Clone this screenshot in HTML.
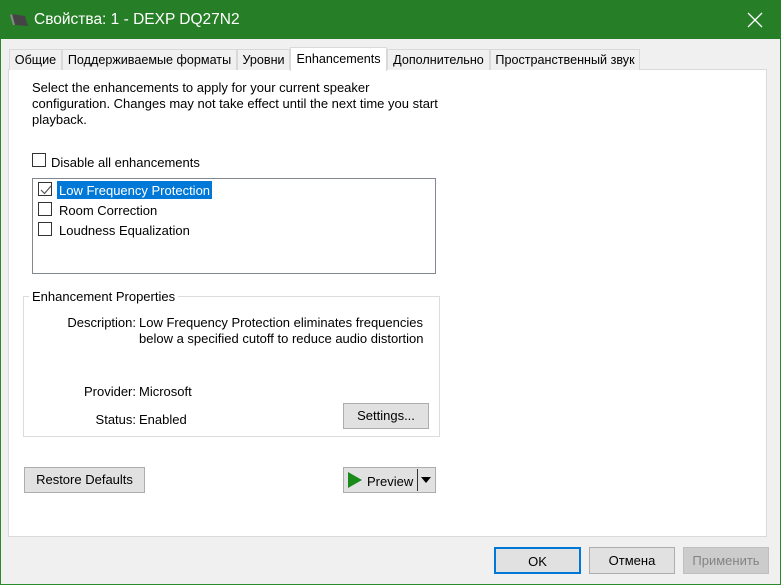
<!DOCTYPE html>
<html><head><meta charset="utf-8"><style>
*{margin:0;padding:0;box-sizing:border-box}
body{width:781px;height:585px;background:#f0f0f0;font-family:"Liberation Sans",sans-serif;font-size:13px;color:#000;position:relative;overflow:hidden}
.a{position:absolute;white-space:nowrap}
.r{position:absolute;white-space:nowrap;text-align:right;width:120px;left:16px}
.win{position:absolute;left:0;top:0;width:781px;height:585px;border:1px solid #2a8a2a}
.title{position:absolute;left:0;top:0;width:781px;height:39px;background:#267f26}
.tab{position:absolute;top:49px;height:21px;border:1px solid #d9d9d9;border-bottom:none;background:#f0f0f0;text-align:center;line-height:20px;font-size:12.6px}
.btn{position:absolute;background:#e1e1e1;border:1px solid #adadad;text-align:center;font-size:13px}
.cb{position:absolute;width:14px;height:14px;border:1px solid #333;background:#fff}
</style></head><body>
<div class="win"></div>
<div class="title"></div>
<svg class="a" style="left:10px;top:12px" width="20" height="16"><polygon points="2,2 15,4 18,14 5,13" fill="#444"/><polygon points="2,2 5,13 3,13 0,3" fill="#888"/></svg>
<div class="a" style="left:34px;top:11px;font-size:15.5px;color:#fff">Свойства: 1 - DEXP DQ27N2</div>
<svg class="a" style="left:747px;top:12px" width="16" height="16"><path d="M1 1L15 15M15 1L1 15" stroke="#fff" stroke-width="1.3"/></svg>
<div class="a" style="left:8px;top:69px;width:759px;height:468px;background:#fff;border:1px solid #d9d9d9"></div>
<div class="tab" style="left:9px;width:53px">Общие</div>
<div class="tab" style="left:62px;width:175px">Поддерживаемые форматы</div>
<div class="tab" style="left:237px;width:53px">Уровни</div>
<div class="tab" style="left:387px;width:103px">Дополнительно</div>
<div class="tab" style="left:490px;width:150px">Пространственный звук</div>
<div class="tab" style="left:290px;top:47px;height:24px;width:97px;background:#fff;line-height:22px">Enhancements</div>
<div class="a" style="left:32px;top:80px;line-height:16px">Select the enhancements to apply for your current speaker<br>configuration. Changes may not take effect until the next time you start<br>playback.</div>
<div class="cb" style="left:32px;top:153px"></div>
<div class="a" style="left:51px;top:155px">Disable all enhancements</div>
<div class="a" style="left:32px;top:178px;width:404px;height:96px;border:1px solid #828790;background:#fff"></div>
<div class="cb" style="left:38px;top:182px"></div>
<svg class="a" style="left:40px;top:184px" width="12" height="12"><path d="M1 6L4.5 9.5L11 2" stroke="#555" stroke-width="1.2" fill="none"/></svg>
<div class="a" style="left:57px;top:181px;width:155px;height:18px;background:#0078d7;color:#fff;line-height:19px;padding-left:2px">Low Frequency Protection</div>
<div class="cb" style="left:38px;top:202px"></div>
<div class="a" style="left:59px;top:203px">Room Correction</div>
<div class="cb" style="left:38px;top:222px"></div>
<div class="a" style="left:59px;top:223px">Loudness Equalization</div>
<div class="a" style="left:23px;top:296px;width:417px;height:141px;border:1px solid #dcdcdc"></div>
<div class="a" style="left:29px;top:289px;background:#fff;padding:0 3px">Enhancement Properties</div>
<div class="r" style="top:315px">Description:</div>
<div class="a" style="left:139px;top:315px;line-height:16px">Low Frequency Protection eliminates frequencies<br>below a specified cutoff to reduce audio distortion</div>
<div class="r" style="top:384px">Provider:</div>
<div class="a" style="left:139px;top:384px">Microsoft</div>
<div class="r" style="top:412px">Status:</div>
<div class="a" style="left:139px;top:412px">Enabled</div>
<div class="btn" style="left:343px;top:403px;width:86px;height:26px;line-height:24px">Settings...</div>
<div class="btn" style="left:24px;top:467px;width:121px;height:26px;line-height:24px">Restore Defaults</div>
<div class="btn" style="left:343px;top:467px;width:93px;height:26px"></div>
<svg class="a" style="left:347px;top:471px" width="16" height="18"><polygon points="1,1 15,9 1,17" fill="#1a8a1a"/></svg>
<div class="a" style="left:367px;top:474px">Preview</div>
<div class="a" style="left:417px;top:469px;width:1px;height:22px;background:#333"></div>
<svg class="a" style="left:420px;top:476px" width="12" height="8"><polygon points="1,1 11,1 6,7" fill="#000"/></svg>
<div class="btn" style="left:494px;top:547px;width:87px;height:27px;line-height:25px;border:2px solid #0078d7">OK</div>
<div class="btn" style="left:589px;top:547px;width:86px;height:27px;line-height:25px">Отмена</div>
<div class="btn" style="left:683px;top:547px;width:86px;height:27px;line-height:25px;color:#838383;background:#ccc;border-color:#bfbfbf">Применить</div>
</body></html>
